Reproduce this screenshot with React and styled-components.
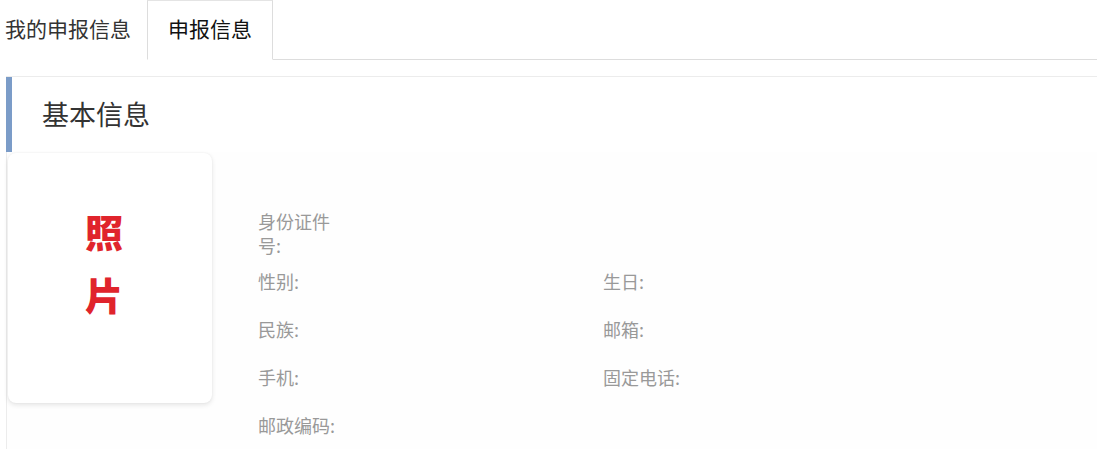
import React from 'react';
import styled, { createGlobalStyle } from 'styled-components';

const GlobalStyle = createGlobalStyle`
  html, body {
    margin: 0;
    padding: 0;
    background: #fff;
    font-family: "Noto Sans CJK SC", "Noto Sans", sans-serif;
  }
`;

const Page = styled.div`
  width: 1097px;
  height: 456px;
  overflow: hidden;
  background: #fff;
`;

const TabBar = styled.div`
  display: flex;
  align-items: flex-end;
  height: 60px;
  box-sizing: border-box;
  border-bottom: 1px solid #ddd;
`;

const Tab = styled.div`
  height: 60px;
  box-sizing: border-box;
  display: flex;
  align-items: center;
  padding: 0 ${p => (p.$active ? '20px' : '16px')} 4px ${p => (p.$active ? '20px' : '5px')};
  margin-bottom: -1px;
  font-size: 21px;
  color: ${p => (p.$active ? '#111' : '#333')};
  background: #fff;
  border: ${p => (p.$active ? '1px solid #ddd' : 'none')};
  border-bottom-color: #fff;
  border-top-color: #e4e4e4;
`;

const Panel = styled.section`
  margin: 16px 0 0 6px;
  border-top: 1px solid #ececec;
  border-left: 1px solid #ececec;
`;

const Heading = styled.h2`
  margin: 0 0 0 -1px;
  height: 75px;
  box-sizing: border-box;
  display: flex;
  align-items: center;
  padding: 0 0 2px 30px;
  border-left: 6px solid #7b9cc8;
  font-size: 27px;
  font-weight: normal;
  color: #333;
`;

const Body = styled.div`
  display: flex;
  gap: 46px;
  background: #fefefe;
`;

const PhotoCard = styled.div`
  flex: none;
  width: 204px;
  height: 250px;
  margin: 1px 0 0 1px;
  border-radius: 8px;
  background: #fff;
  box-shadow: 0 2px 5px rgba(0, 0, 0, 0.1), 0 0 2px rgba(0, 0, 0, 0.06);
  display: flex;
  justify-content: center;
  padding: 46px 12px 0 0;
  box-sizing: border-box;
`;

const PhotoText = styled.div`
  width: 1em;
  font-size: 38px;
  line-height: 63px;
  font-weight: 900;
  color: #e0242c;
  text-align: center;
`;

const InfoGrid = styled.div`
  padding-top: 57px;
  display: grid;
  grid-template-columns: 345px 345px;
  grid-auto-rows: 48px;
`;

const Field = styled.div`
  display: flex;
  align-items: center;
  grid-column: ${p => (p.$wide ? '1 / span 2' : 'auto')};
`;

const Label = styled.span`
  width: 80px;
  font-size: 18px;
  line-height: 24px;
  color: #999;
`;

const Value = styled.span`
  font-size: 18px;
  color: #333;
`;

const rows = [
  [{ label: '身份证件号:' }],
  [{ label: '性别:' }, { label: '生日:' }],
  [{ label: '民族:' }, { label: '邮箱:' }],
  [{ label: '手机:' }, { label: '固定电话:' }],
  [{ label: '邮政编码:' }],
];

export default function App() {
  return (
    <Page>
      <GlobalStyle />
      <TabBar>
        <Tab>我的申报信息</Tab>
        <Tab $active>申报信息</Tab>
      </TabBar>
      <Panel>
        <Heading>基本信息</Heading>
        <Body>
          <PhotoCard>
            <PhotoText>照片</PhotoText>
          </PhotoCard>
          <InfoGrid>
            {rows.map((row, i) =>
              row.map((f, j) => (
                <Field key={`${i}-${j}`} $wide={row.length === 1}>
                  <Label>{f.label}</Label>
                  <Value>{f.value}</Value>
                </Field>
              ))
            )}
          </InfoGrid>
        </Body>
      </Panel>
    </Page>
  );
}
